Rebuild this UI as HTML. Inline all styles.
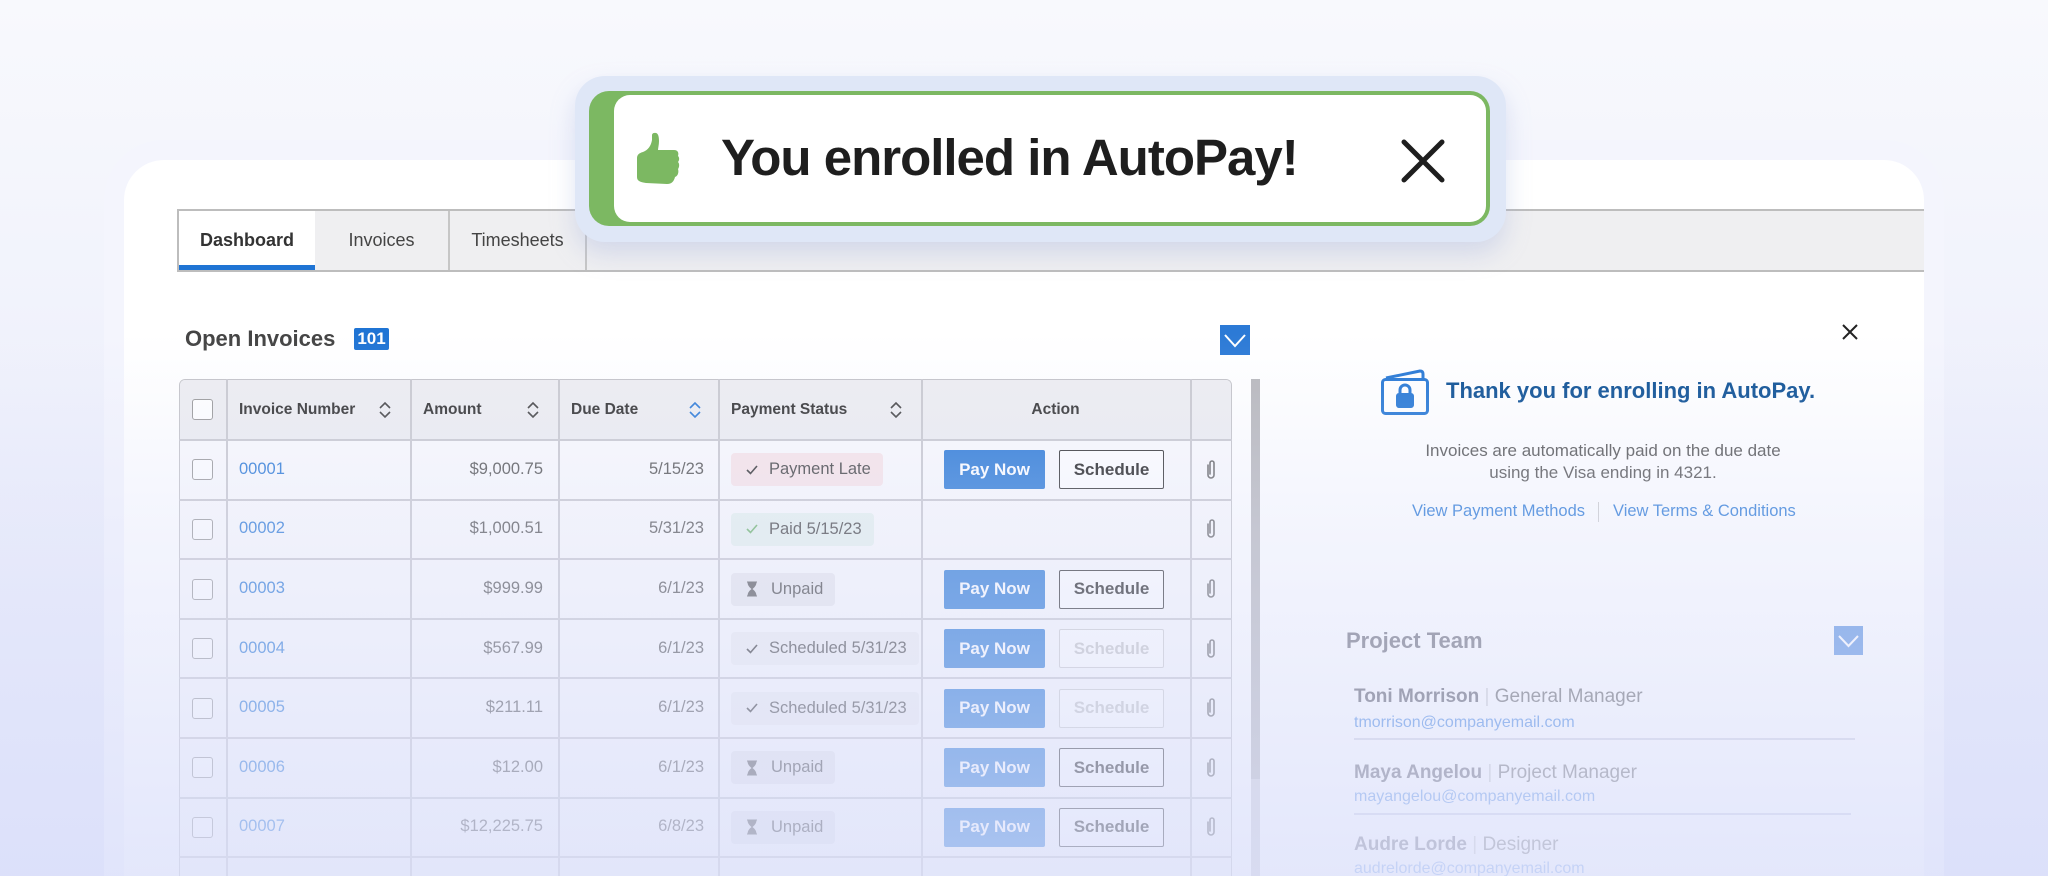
<!DOCTYPE html>
<html><head><meta charset="utf-8"><style>
*{box-sizing:border-box;margin:0;padding:0}
html,body{width:2048px;height:876px;overflow:hidden}
body{font-family:"Liberation Sans",Arial,sans-serif;}
#wrap{position:relative;width:2048px;height:876px;overflow:hidden;background:linear-gradient(180deg,#f8f9fd 0%,#eef0fb 50%,#e2e5f9 100%)}
.abs{position:absolute}
.frame{left:104px;top:140px;width:1840px;height:736px;border-radius:60px 60px 0 0;background:#f4f5fd}
.card{left:124px;top:160px;width:1800px;height:716px;border-radius:40px 40px 0 0;background:#fff;overflow:hidden}
.tabs{left:177px;top:209px;width:1747px;height:63px;background:#efeff1;border-top:2px solid #bdbdbd;border-bottom:2px solid #bdbdbd;border-left:2px solid #bdbdbd}
.tab{position:absolute;top:0;height:59px;font-size:18px;color:#444;display:flex;align-items:center;justify-content:center;border-right:2px solid #c6c6c6}
.cell{position:absolute;font-size:16.5px;color:#555;display:flex;align-items:center}
.hl{position:absolute;background:#c9c9cf}
.cb{position:absolute;width:21px;height:21px;border:1.5px solid #999;border-radius:3px;background:#fff}
.badge{position:absolute;height:33px;border-radius:4px;font-size:16.5px;color:#444;display:flex;align-items:center;padding:0 12px 0 14px}
.pay{position:absolute;width:101px;height:39px;background:#2c7ad6;color:#fff;font-weight:bold;font-size:17px;display:flex;align-items:center;justify-content:center;border-radius:2px}
.sch{position:absolute;width:105px;height:39px;border:1.5px solid #333;color:#222;font-weight:bold;font-size:17px;display:flex;align-items:center;justify-content:center;border-radius:2px;background:#fff}
.sch.dis{border-color:#ccc;color:#c4c4c4}
</style></head><body><div id="wrap">
<div class="abs frame"></div>
<div class="abs card"></div>

<div class="abs tabs">
 <div class="tab" style="left:0;width:136px;background:#fff;font-weight:bold;color:#333;border-right:none">Dashboard<div style="position:absolute;left:0;bottom:0;width:136px;height:5px;background:#1f74d4"></div></div>
 <div class="tab" style="left:136px;width:135px">Invoices</div>
 <div class="tab" style="left:271px;width:137px">Timesheets</div>
</div>

<div class="abs" style="left:185px;top:326px;font-size:22px;font-weight:bold;color:#444">Open Invoices</div>
<div class="abs" style="left:354px;top:328px;width:35px;height:22px;background:#1f74d4;color:#fff;font-weight:bold;font-size:17px;display:flex;align-items:center;justify-content:center;border-radius:2px">101</div>
<div class="abs" style="left:1220px;top:325px;width:30px;height:30px;background:#2c7ad6"><svg width="30" height="30"><path d="M5 10 L15 21 L25 10" stroke="#fff" stroke-width="2" fill="none"/></svg></div>

<div class="abs" style="left:179px;top:379px;width:1053px;height:497px;border:1.5px solid #c4c4c8;border-bottom:none;border-radius:6px 6px 0 0;background:#fafafc;overflow:hidden">
 <div style="position:absolute;left:0;top:0;width:100%;height:61px;background:#ededf1;border-bottom:2px solid #c4c4c8"></div>
</div>
<div class="abs" style="left:1251px;top:379px;width:9px;height:497px;background:#d0d0d6"></div>
<div class="abs" style="left:1251px;top:379px;width:9px;height:400px;background:#b8b8bc"></div>

<div id="t"></div>

<div class="abs" style="left:1840px;top:322px"><svg width="20" height="20"><path d="M3 3L17 17M17 3L3 17" stroke="#222" stroke-width="2"/></svg></div>
<div class="abs" style="left:1378px;top:366px"><svg width="54" height="52"><path d="M8 12 L42 5 Q45 5 45 8 L45 13" stroke="#2577d4" stroke-width="3" fill="none" stroke-linejoin="round"/><rect x="4.5" y="13.5" width="45" height="34" rx="3" stroke="#2577d4" stroke-width="3" fill="none"/><path d="M22 28 V24 A5 5 0 0 1 32 24 V28" stroke="#2577d4" stroke-width="3" fill="none"/><rect x="18" y="27" width="18" height="15" rx="3" fill="#2577d4"/></svg></div>
<div class="abs" style="left:1446px;top:378px;font-size:22px;font-weight:bold;color:#0b4f93">Thank you for enrolling in AutoPay.</div>
<div class="abs" style="left:1403px;top:440px;width:400px;text-align:center;font-size:17px;line-height:22px;color:#555">Invoices are automatically paid on the due date<br>using the Visa ending in 4321.</div>
<div class="abs" style="left:1412px;top:502px;font-size:16.5px;color:#2c7ad6">View Payment Methods</div>
<div class="abs" style="left:1598px;top:502px;width:1px;height:20px;background:#ccc"></div>
<div class="abs" style="left:1613px;top:502px;font-size:16.5px;color:#2c7ad6">View Terms &amp; Conditions</div>

<div class="abs" style="left:1346px;top:628px;font-size:22px;font-weight:bold;color:#6e6e78">Project Team</div>
<div class="abs" style="left:1834px;top:626px;width:29px;height:29px;background:#5d93e0"><svg width="29" height="29"><path d="M5 10 L14.5 20 L24 10" stroke="#fff" stroke-width="2" fill="none"/></svg></div>

<div class="abs" style="left:1354px;top:686px;font-size:19px;color:#666"><b style="color:#5a5a64">Toni Morrison</b> <span style="color:#ccc">|</span> General Manager</div>
<div class="abs" style="left:1354px;top:714px;font-size:16px;color:#4a8ae0">tmorrison@companyemail.com</div>
<div class="abs" style="left:1354px;top:738px;width:501px;height:2px;background:#d3d5e2"></div>
<div class="abs" style="left:1354px;top:762px;font-size:19px;color:#777"><b style="color:#6b6b76">Maya Angelou</b> <span style="color:#ccc">|</span> Project Manager</div>
<div class="abs" style="left:1354px;top:788px;font-size:16px;color:#6c9ee6">mayangelou@companyemail.com</div>
<div class="abs" style="left:1354px;top:813px;width:497px;height:2px;background:#d3d5e6"></div>
<div class="abs" style="left:1354px;top:834px;font-size:19px;color:#888"><b style="color:#80808c">Audre Lorde</b> <span style="color:#ccc">|</span> Designer</div>
<div class="abs" style="left:1354px;top:858px;height:18px;overflow:hidden;font-size:16px;line-height:22px;color:#8ab0ec">audrelorde@companyemail.com</div>

<div class="abs" style="left:0;top:0;width:2048px;height:876px;background:linear-gradient(180deg,rgba(222,226,250,0) 0%,rgba(222,226,250,0) 38%,rgba(222,226,250,0.35) 60%,rgba(218,223,250,0.75) 100%);pointer-events:none"></div>

<div class="abs" style="left:575px;top:76px;width:931px;height:166px;border-radius:30px;background:#dfe7f7;box-shadow:0 12px 24px rgba(160,175,220,0.35)"></div>
<div class="abs" style="left:589px;top:91px;width:901px;height:135px;border-radius:20px;background:#7cb862"></div>
<div class="abs" style="left:614px;top:95px;width:872px;height:127px;border-radius:16px;background:#fff"></div>
<div class="abs" style="left:634px;top:131px"><svg width="48" height="56"><path d="M20 2 C24 1 25 5 25 10 C25 14 24 17 24 19 L40 19 C44 19 45 22 44 25 C46 27 45 30 44 31 C46 33 45 37 44 38 C45 41 44 45 41 46 C40 50 38 53 33 53 L12 52 C6 51 3 50 3 46 L3 27 C3 24 5 22 9 21 C14 19 17 15 18 9 L18 4 C18 3 19 2 20 2 Z" fill="#7cb862"/></svg></div>
<div class="abs" style="left:721px;top:128px;font-size:51px;font-weight:bold;color:#1e1e1e;letter-spacing:-1px;line-height:60px">You enrolled in AutoPay!</div>
<div class="abs" style="left:1400px;top:138px"><svg width="46" height="46"><path d="M4 4L42 42M42 4L4 42" stroke="#1e1e1e" stroke-width="5" stroke-linecap="round"/></svg></div>
</div>
<script>
var cols=[179,226,410,558,718,921,1190,1232];
var h='';
var H=379,HB=440;
for(var i=1;i<cols.length-1;i++)h+='<div class="hl" style="left:'+cols[i]+'px;top:'+H+'px;width:1.5px;height:'+(876-H)+'px"></div>';
h+='<div class="cb" style="left:192px;top:399px"></div>';
function sort(x,c){return '<svg class="abs" style="left:'+x+'px;top:400px" width="14" height="20"><path d="M2 8L7 3L12 8M2 12L7 17L12 12" stroke="'+c+'" stroke-width="1.6" fill="none"/></svg>';}
h+='<div class="cell" style="left:239px;top:'+H+'px;height:61px;font-weight:bold;color:#333;font-size:15.5px">Invoice Number</div>'+sort(378,'#444');
h+='<div class="cell" style="left:423px;top:'+H+'px;height:61px;font-weight:bold;color:#333;font-size:15.5px">Amount</div>'+sort(526,'#444');
h+='<div class="cell" style="left:571px;top:'+H+'px;height:61px;font-weight:bold;color:#333;font-size:15.5px">Due Date</div>'+sort(688,'#2c7ad6');
h+='<div class="cell" style="left:731px;top:'+H+'px;height:61px;font-weight:bold;color:#333;font-size:15.5px">Payment Status</div>'+sort(889,'#444');
h+='<div class="cell" style="left:921px;width:269px;justify-content:center;top:'+H+'px;height:61px;font-weight:bold;color:#333;font-size:15.5px">Action</div>';
var rows=[
['00001','$9,000.75','5/15/23','late','Payment Late',1,1],
['00002','$1,000.51','5/31/23','paid','Paid 5/15/23',0,0],
['00003','$999.99','6/1/23','unpaid','Unpaid',1,1],
['00004','$567.99','6/1/23','sched','Scheduled 5/31/23',1,2],
['00005','$211.11','6/1/23','sched','Scheduled 5/31/23',1,2],
['00006','$12.00','6/1/23','unpaid','Unpaid',1,1],
['00007','$12,225.75','6/8/23','unpaid','Unpaid',1,1]];
var chk='<svg width="14" height="14" style="margin-right:10px"><path d="M2 7L5.5 10.5L12 3" stroke="#333" stroke-width="1.6" fill="none"/></svg>';
var chkg='<svg width="14" height="14" style="margin-right:10px"><path d="M2 7L5.5 10.5L12 3" stroke="#6cb36a" stroke-width="1.6" fill="none"/></svg>';
var hg='<svg width="14" height="16" style="margin-right:12px"><path d="M2 1H12M2 15H12M3 1C3 6 7 7 7 8C7 9 3 10 3 15H11C11 10 7 9 7 8C7 7 11 6 11 1Z" fill="#555" stroke="#555" stroke-width="1"/></svg>';
for(var r=0;r<=rows.length;r++){
 var y=HB+r*59.6, R=rows[r];
 h+='<div class="hl" style="left:179px;top:'+(y-1)+'px;width:1053px;height:2px"></div>';
 if(!R)continue;
 var c=y+29.8;
 h+='<div class="cb" style="left:192px;top:'+(c-10.5)+'px"></div>';
 h+='<div class="cell" style="left:239px;top:'+(c-10)+'px;color:#2c7ad6">'+R[0]+'</div>';
 h+='<div class="cell" style="left:410px;width:133px;justify-content:flex-end;top:'+(c-10)+'px">'+R[1]+'</div>';
 h+='<div class="cell" style="left:558px;width:146px;justify-content:flex-end;top:'+(c-10)+'px">'+R[2]+'</div>';
 var bg={late:'#f8e5e8',paid:'#e6f2ee',unpaid:'#e8e8ec',sched:'#efeff1'}[R[3]];
 var ic={late:chk,paid:chkg,unpaid:hg,sched:chk}[R[3]];
 h+='<div class="badge" style="left:731px;top:'+(c-16.5)+'px;background:'+bg+'">'+ic+R[4]+'</div>';
 if(R[5]){h+='<div class="pay" style="left:944px;top:'+(c-19.5)+'px">Pay Now</div>';
  h+='<div class="sch'+(R[6]==2?' dis':'')+'" style="left:1059px;top:'+(c-19.5)+'px">Schedule</div>';}
 h+='<svg class="abs" style="left:1204px;top:'+(c-11)+'px" width="14" height="22"><path d="M4 6V16A3 3 0 0 0 10 16V4A2 2 0 0 0 6 4V15" stroke="#666" stroke-width="1.6" fill="none" stroke-linecap="round"/></svg>';
}
var d=document.createElement('div');d.innerHTML=h;
var w=document.getElementById('wrap');
while(d.firstChild)w.insertBefore(d.firstChild,document.getElementById('t'));
</script>
</body></html>
